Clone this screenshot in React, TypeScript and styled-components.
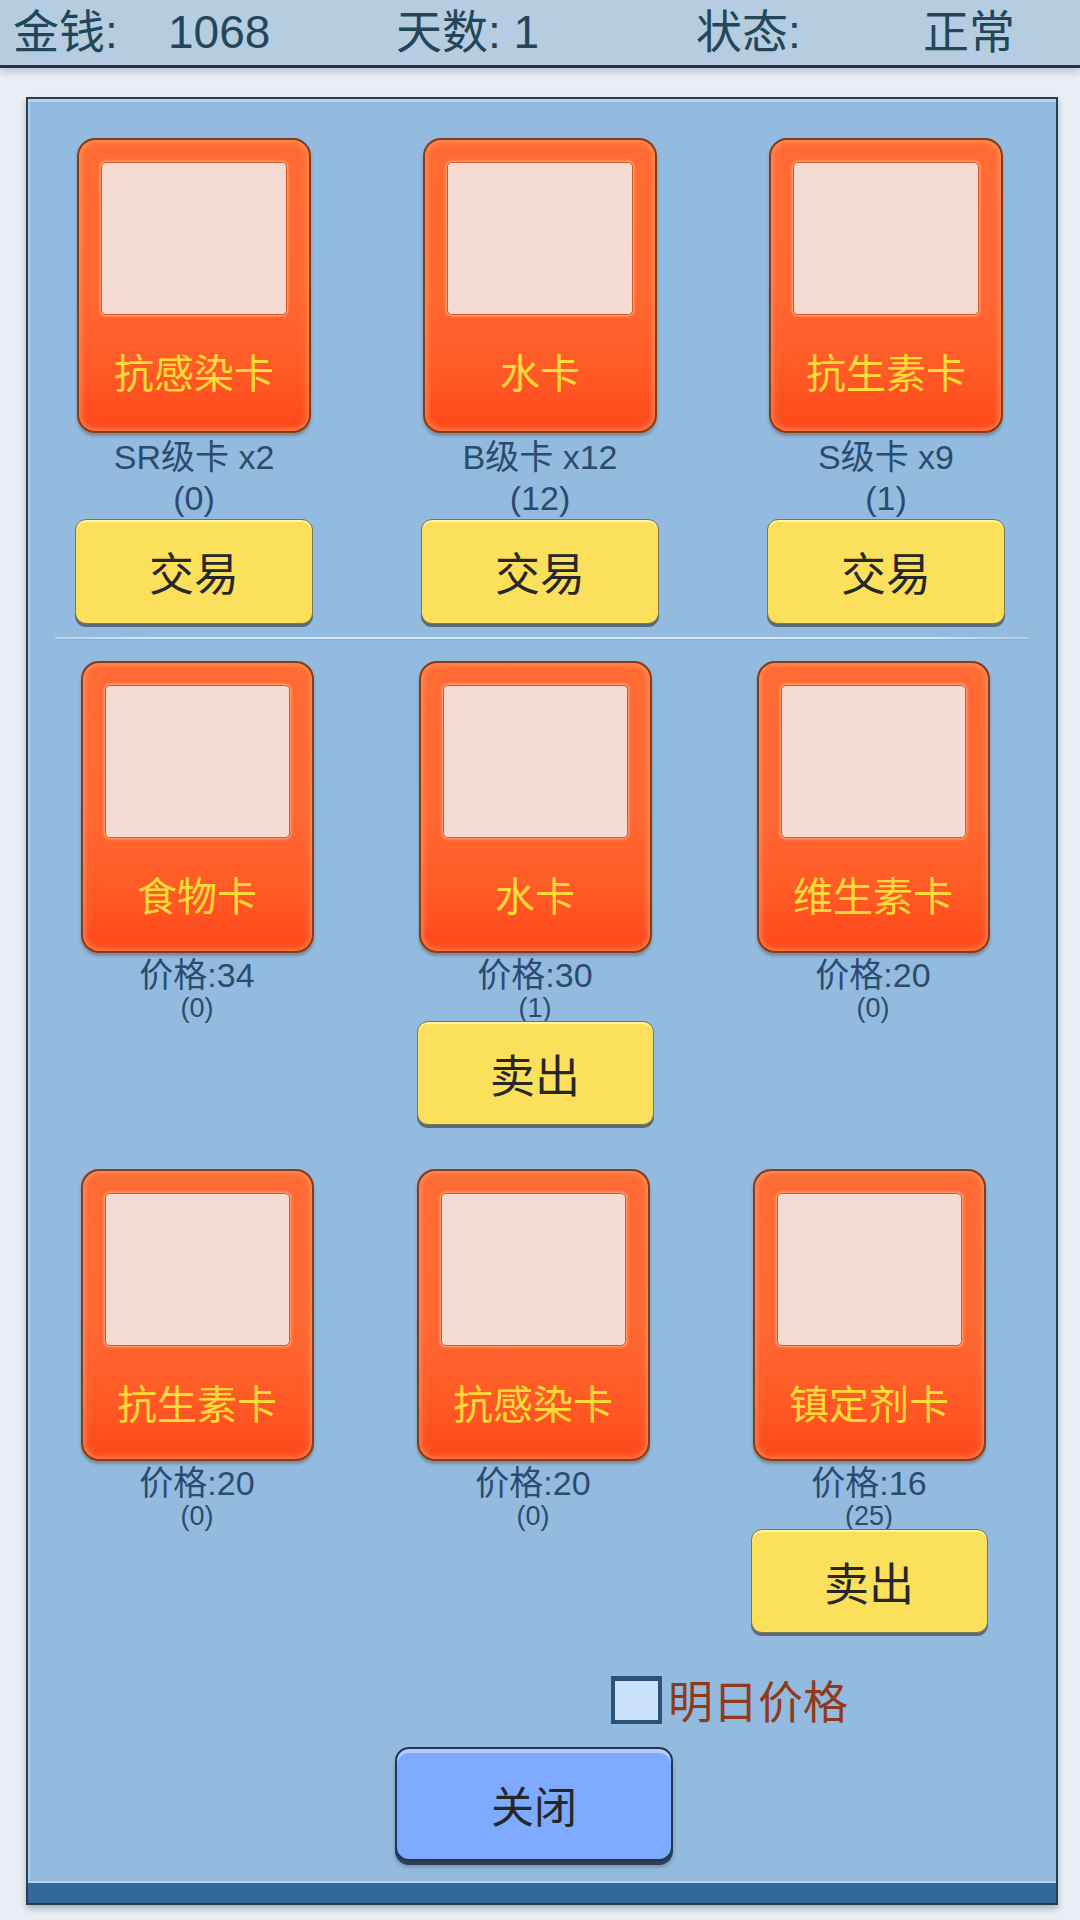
import React from "react";
import styled, { createGlobalStyle } from "styled-components";

const GlobalStyle = createGlobalStyle`
  html, body {
    margin: 0;
    padding: 0;
    background: #e8eef3;
  }
  body {
    font-family: "Liberation Sans", "Noto Sans CJK SC", sans-serif;
    width: 1080px;
    height: 1920px;
    overflow: hidden;
  }
  * { box-sizing: border-box; }
`;

const Screen = styled.div`
  width: 1080px;
  height: 1920px;
  display: flex;
  flex-direction: column;
  background: #e8eef3;
`;

const Header = styled.header`
  height: 68px;
  flex: none;
  display: grid;
  grid-template-columns: 155px 228px 300px 227px auto;
  align-items: center;
  padding-left: 13px;
  background: #b6cde1;
  border-bottom: 3px solid #1f3447;
  box-shadow: 0 4px 7px rgba(40, 60, 90, 0.22);
  position: relative;
  z-index: 1;
`;

const HeaderText = styled.span`
  font-family: "Liberation Sans", "Noto Sans CJK SC", sans-serif;
  font-size: 46px;
  line-height: 65px;
  color: #23475a;
  white-space: pre;
`;

const Panel = styled.main`
  margin: 29px 0 0 26px;
  width: 1032px;
  display: flex;
  flex-direction: column;
  background: #93bbe0;
  border: 2px solid #2b3d52;
  border-bottom-width: 1px;
  box-shadow: inset 0 3px 0 #b8d3ec, inset 2px 0 0 #a9c9e8, 0 4px 6px rgba(30, 50, 80, 0.3);
`;

const CardRow = styled.section<{ $top: number; $left: number; $gap: number }>`
  display: grid;
  grid-template-columns: repeat(3, 240px);
  column-gap: ${(p) => p.$gap}px;
  margin-top: ${(p) => p.$top}px;
  padding-left: ${(p) => p.$left}px;
  align-items: start;
`;

const Slot = styled.div`
  display: flex;
  flex-direction: column;
  align-items: center;
`;

const Card = styled.div<{ $w: number; $h: number }>`
  width: ${(p) => p.$w}px;
  height: ${(p) => p.$h}px;
  border: 2.5px solid #873c14;
  border-radius: 18px;
  background: linear-gradient(180deg, #ff6b34 0%, #ff6831 52%, #ff5a26 80%, #ff4719 100%);
  box-shadow: inset 0 0 5px 3px rgba(255, 160, 110, 0.55), 0 3px 3px rgba(70, 50, 40, 0.35);
  padding: 22px 22px 0;
  display: flex;
  flex-direction: column;
  align-items: center;
`;

const Picture = styled.div`
  width: 100%;
  height: 153px;
  flex: none;
  background: #f6dbd3;
  border: 1.5px solid #d45a2c;
  border-radius: 5px;
  box-shadow: 0 0 3px 1px rgba(255, 190, 150, 0.8);
`;

const CardTitle = styled.div`
  margin-top: 33px;
  font-family: "Noto Sans CJK SC", sans-serif;
  font-size: 40px;
  line-height: 46px;
  color: #ffdb3a;
  white-space: nowrap;
`;

const Label = styled.div<{ $size: number; $lh: number; $mt?: number }>`
  margin-top: ${(p) => p.$mt ?? 0}px;
  font-family: "Liberation Sans", "Noto Sans CJK SC", sans-serif;
  font-size: ${(p) => p.$size}px;
  line-height: ${(p) => p.$lh}px;
  color: #2b4b6f;
  white-space: nowrap;
  text-align: center;
`;

const YellowButton = styled.button<{ $w: number; $h: number; $mt?: number }>`
  margin-top: ${(p) => p.$mt ?? 0}px;
  width: ${(p) => p.$w}px;
  height: ${(p) => p.$h}px;
  background: #fbe15b;
  border: 1.5px solid #7b7653;
  border-radius: 11px;
  box-shadow: inset 0 2px 0 #fff3a6, 0 3px 0 rgba(70, 80, 85, 0.75);
  font-family: "Noto Sans CJK SC", sans-serif;
  font-size: 45px;
  color: #272727;
  padding: 0;
  cursor: pointer;
`;

const Divider = styled.div`
  margin: 13px 0 0 27px;
  width: 974px;
  height: 2px;
  background: linear-gradient(90deg, rgba(210, 228, 245, 0.6), #d4e6f6 10%, #d4e6f6 90%, rgba(210, 228, 245, 0.4));
  box-shadow: 0 1px 0 rgba(120, 160, 200, 0.35);
`;

const CheckRow = styled.label`
  margin-top: 43px;
  padding-left: 583px;
  display: flex;
  align-items: center;
  height: 48px;
`;

const CheckBox = styled.span`
  width: 51px;
  height: 48px;
  border: 4px solid #2c5277;
  border-top-width: 5px;
  background: #c9e2fa;
  flex: none;
`;

const CheckText = styled.span`
  margin-left: 6px;
  font-family: "Noto Sans CJK SC", sans-serif;
  font-size: 45px;
  line-height: 48px;
  color: #8f3a1c;
`;

const CloseButton = styled.button`
  margin: 23px 0 0 367px;
  width: 278px;
  height: 114px;
  background: #7eaaff;
  border: 2px solid #24384f;
  border-radius: 14px;
  box-shadow: inset 0 4px 0 #b6ccff, 0 4px 0 #2d4058, 0 6px 4px rgba(30, 40, 60, 0.3);
  font-family: "Noto Sans CJK SC", sans-serif;
  font-size: 43px;
  color: #272727;
  padding: 0;
  cursor: pointer;
`;

const BottomBar = styled.div`
  margin-top: 20px;
  height: 23px;
  background: #33689a;
  border-top: 2px solid #b3d0ec;
  border-bottom: 1px solid #1f3a56;
`;

type Item = { name: string; line1: string; line2: string; btn?: string };

const tradeItems: Item[] = [
  { name: "抗感染卡", line1: "SR级卡 x2", line2: "(0)", btn: "交易" },
  { name: "水卡", line1: "B级卡 x12", line2: "(12)", btn: "交易" },
  { name: "抗生素卡", line1: "S级卡 x9", line2: "(1)", btn: "交易" },
];

const sellRow1: Item[] = [
  { name: "食物卡", line1: "价格:34", line2: "(0)" },
  { name: "水卡", line1: "价格:30", line2: "(1)", btn: "卖出" },
  { name: "维生素卡", line1: "价格:20", line2: "(0)" },
];

const sellRow2: Item[] = [
  { name: "抗生素卡", line1: "价格:20", line2: "(0)" },
  { name: "抗感染卡", line1: "价格:20", line2: "(0)" },
  { name: "镇定剂卡", line1: "价格:16", line2: "(25)", btn: "卖出" },
];

function GameCard({ name, w, h }: { name: string; w: number; h: number }) {
  return (
    <Card $w={w} $h={h}>
      <Picture />
      <CardTitle>{name}</CardTitle>
    </Card>
  );
}

export default function App() {
  return (
    <>
      <GlobalStyle />
      <Screen>
        <Header>
          <HeaderText>金钱:</HeaderText>
          <HeaderText>1068</HeaderText>
          <HeaderText>天数: 1</HeaderText>
          <HeaderText>状态:</HeaderText>
          <HeaderText>正常</HeaderText>
        </Header>
        <Panel>
          <CardRow $top={39} $left={46} $gap={106}>
            {tradeItems.map((it) => (
              <Slot key={it.name}>
                <GameCard name={it.name} w={234} h={295} />
                <Label $size={34} $lh={41} $mt={4}>{it.line1}</Label>
                <Label $size={34} $lh={41}>{it.line2}</Label>
                <YellowButton $w={238} $h={105}>{it.btn}</YellowButton>
              </Slot>
            ))}
          </CardRow>
          <Divider />
          {[sellRow1, sellRow2].map((row, ri) => (
            <CardRow key={ri} $top={ri === 0 ? 22 : 44} $left={49} $gap={ri === 0 ? 98 : 96}>
              {row.map((it) => (
                <Slot key={it.name}>
                  <GameCard name={it.name} w={233} h={292} />
                  <Label $size={34} $lh={36} $mt={4}>{it.line1}</Label>
                  <Label $size={27} $lh={30}>{it.line2}</Label>
                  {it.btn && (
                    <YellowButton $w={237} $h={104} $mt={-2}>
                      {it.btn}
                    </YellowButton>
                  )}
                </Slot>
              ))}
            </CardRow>
          ))}
          <CheckRow>
            <CheckBox />
            <CheckText>明日价格</CheckText>
          </CheckRow>
          <CloseButton>关闭</CloseButton>
          <BottomBar />
        </Panel>
      </Screen>
    </>
  );
}
